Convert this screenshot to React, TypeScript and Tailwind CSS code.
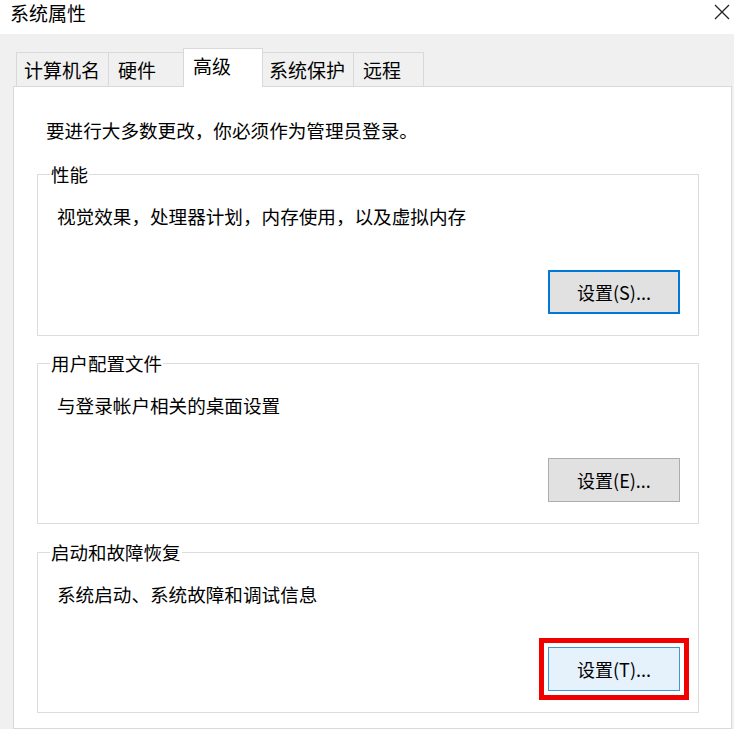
const FONT = { fontFamily: '"Noto Sans CJK SC", "Noto Sans", sans-serif' };

const tabs = [
  { label: "计算机名", width: "w-[93px]", pad: "pl-[7px]" },
  { label: "硬件", width: "w-[76px]", pad: "pl-[9px]" },
  { label: "高级", width: "w-[80px]", pad: "pl-[9px]", active: true },
  { label: "系统保护", width: "w-[92px]", pad: "pl-[6px]" },
  { label: "远程", width: "w-[71px]", pad: "pl-[9px]" },
];

function Tab({ label, width, pad, active }: { label: string; width: string; pad: string; active?: boolean }) {
  if (active) {
    return (
      <div className={`${width} ${pad} h-[39px] -mb-px -ml-px relative z-10 bg-white border border-b-0 border-[#d9d9d9] flex pt-[5px] text-[19px] leading-[24px] text-black`}>
        {label}
      </div>
    );
  }
  return (
    <div className={`${width} ${pad} h-[34px] -ml-px first:ml-0 bg-[#f0f0f0] border border-b-0 border-[#d9d9d9] flex items-center text-[19px] leading-[24px] text-black`}>
      {label}
    </div>
  );
}

interface GroupProps {
  title: string;
  desc: string;
  button: string;
  variant: "focused" | "normal" | "hover";
  height: string;
  className?: string;
}

function GroupBox({ title, desc, button, variant, height, className = "" }: GroupProps) {
  const btn =
    variant === "focused"
      ? "border-2 border-[#0078d7] bg-[#e1e1e1]"
      : variant === "hover"
        ? "border border-[#3f94dc] bg-[#e5f1fb] outline-[5px] outline-solid outline-[#f00000] outline-offset-[4px]"
        : "border border-[#adadad] bg-[#e1e1e1]";
  return (
    <div className={`relative ${height} border border-[#dcdcdc] flex flex-col ${className}`}>
      <span className="absolute -top-[13px] left-[12px] bg-white px-[1px] text-[18.5px] leading-[24px] text-black">{title}</span>
      <p className="pt-[29px] pl-[19px] text-[18.6px] leading-[24px] text-black">{desc}</p>
      <div className="mt-auto flex justify-end pr-[18px] pb-[21px]">
        <button className={`w-[132px] h-[44px] flex items-center justify-center text-[18px] text-black ${btn}`}>{button}</button>
      </div>
    </div>
  );
}

export default function App() {
  return (
    <div className="w-[734px] h-[729px] overflow-hidden bg-white flex flex-col" style={FONT}>
      <div className="h-[34px] flex items-start justify-between pl-[10px] pr-[3px] shrink-0">
        <span className="text-[19px] leading-[26px] text-black">系统属性</span>
        <svg width="18" height="18" viewBox="0 0 18 18" className="mt-[3px]">
          <path d="M2 2 L16 16 M16 2 L2 16" stroke="#222" strokeWidth="1.3" fill="none" />
        </svg>
      </div>
      <div className="flex-1 bg-[#f0f0f0] pl-[13px] pr-[2px] flex flex-col min-h-0">
        <div className="flex items-end h-[52px] pl-[3px] shrink-0">
          {tabs.map((t) => (
            <Tab key={t.label} {...t} />
          ))}
        </div>
        <div className="flex-1 bg-white border border-[#d9d9d9] pl-[23px] pr-[32px] pt-[31px]">
          <p className="ml-[9px] text-[18.6px] leading-[24px] text-black">要进行大多数更改，你必须作为管理员登录。</p>
          <GroupBox className="mt-[32px]" height="h-[162px]" title="性能" desc="视觉效果，处理器计划，内存使用，以及虚拟内存" button="设置(S)..." variant="focused" />
          <GroupBox className="mt-[27px]" height="h-[161px]" title="用户配置文件" desc="与登录帐户相关的桌面设置" button="设置(E)..." variant="normal" />
          <GroupBox className="mt-[28px]" height="h-[161px]" title="启动和故障恢复" desc="系统启动、系统故障和调试信息" button="设置(T)..." variant="hover" />
        </div>
      </div>
    </div>
  );
}
